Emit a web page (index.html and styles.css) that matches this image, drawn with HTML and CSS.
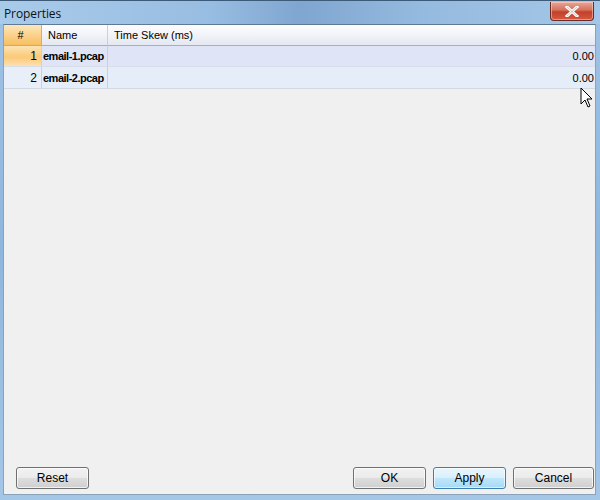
FILE: index.html
```html
<!DOCTYPE html>
<html>
<head>
<meta charset="utf-8">
<link rel="stylesheet" href="styles.css">
</head>
<body>
<div class="window">
  <div class="titlebar">
    <span class="title">Properties</span>
    <div class="close"><svg width="14" height="11" viewBox="0 0 14 11"><path d="M2 1 L12 10 M12 1 L2 10" stroke="#fff" stroke-width="3" stroke-linecap="square"/><path d="M2 1 L12 10 M12 1 L2 10" stroke="#7a2a22" stroke-width="0.6" fill="none" opacity="0.5"/></svg></div>
  </div>
  <div class="client">
    <div class="grid">
      <div class="row head">
        <div class="c num hsel">#</div>
        <div class="c name">Name</div>
        <div class="c skew">Time Skew (ms)</div>
      </div>
      <div class="row r1">
        <div class="c num nsel">1</div>
        <div class="c name b">email-1.pcap</div>
        <div class="c skew val">0.00</div>
      </div>
      <div class="row r2">
        <div class="c num">2</div>
        <div class="c name b">email-2.pcap</div>
        <div class="c skew val">0.00</div>
      </div>
    </div>
    <div class="spacer"></div>
    <div class="buttons">
      <button class="btn">Reset</button>
      <div class="grow"></div>
      <button class="btn">OK</button>
      <button class="btn focus">Apply</button>
      <button class="btn wide">Cancel</button>
    </div>
  </div>
  <svg class="cursor" width="14" height="22" viewBox="0 0 14 22"><path d="M1 1 L1 17 L5 13 L8 20 L10 19 L7 12 L12 12 Z" fill="#fff" stroke="#000" stroke-width="1" stroke-linejoin="miter"/></svg>
</div>
</body>
</html>
```
FILE: styles.css
```css
* { box-sizing: border-box; }
html, body { margin: 0; padding: 0; }
body { width: 600px; height: 500px; overflow: hidden; font-family: "Liberation Sans", Arial, sans-serif; font-size: 11px; color: #000; }
.window { position: relative; width: 600px; height: 500px; display: flex; flex-direction: column; background: linear-gradient(180deg, #9fc3e6 0%, #8fb6dc 50%, #a4c7e8 100%); padding: 0 4px 5px 3px; }
.titlebar { height: 24px; display: flex; align-items: center; position: relative; background: linear-gradient(90deg, #a9cbea 0%, #98bde2 35%, #7fa6d0 50%, #95badf 70%, #a4c7e8 100%); margin: 0 -4px 0 -3px; padding: 0 6px 0 4px; border-top: 1px solid #3d5a78; }
.title { font-family: "Open Sans", "Liberation Sans", sans-serif; font-size: 12px; color: #111; letter-spacing: -0.1px; margin-top: 1px; }
.close { position: absolute; right: 6px; top: 1px; width: 44px; height: 19px; border: 1px solid #6b2a22; border-top: none; border-radius: 0 0 4px 4px; background: linear-gradient(180deg, #e8a796 0%, #d5705a 45%, #c2402c 55%, #d45a3e 100%); display: flex; align-items: center; justify-content: center; box-shadow: inset 0 0 0 1px rgba(255,220,210,0.5); }
.client { flex: 1; display: flex; flex-direction: column; background: #f0f0f0; border: 1px solid #8aa2ba; border-top-color: #5f7a95; }
.grid { display: flex; flex-direction: column; }
.row { display: flex; height: 21px; }
.row.r2 { height: 22px; border-bottom: 1px solid #d4dae4; }
.c { display: flex; align-items: center; padding: 0 6px; border-right: 1px solid #c8d0dc; border-bottom: 1px solid #d8dde8; white-space: nowrap; flex-shrink: 0; overflow: hidden; }
.num { width: 38px; justify-content: flex-end; padding-right: 4px; font-size: 12px; }
.name { width: 66px; }
.skew { flex: 1 1 auto; border-right: none; }
.head .c { background: linear-gradient(180deg, #fdfdfe 0%, #f1f3f8 50%, #e4e8f1 100%); border-bottom: 1px solid #a6afc2; border-right-color: #c9cfdc; }
.head .num { justify-content: center; padding: 0 4px 0 0; font-size: 11px; }
.head .hsel { background: linear-gradient(180deg, #fde6bc 0%, #fbd28c 50%, #f8bf60 100%); border-right-color: #d9ae6a; }
.r1 .c { background: #dfe5f7; }
.r2 .c { background: #e4edf8; border-bottom: none; }
.r1 .nsel { background: linear-gradient(180deg, #fde3b4 0%, #fbc978 55%, #fde1ae 100%); }
.r2 .num { background: #e9eff8; }
.b { font-weight: bold; letter-spacing: -0.5px; padding-left: 1px; padding-right: 0; font-size: 11px; }
.val { justify-content: flex-end; padding-right: 1px; font-size: 11px; }
.spacer { flex: 1; }
.buttons { display: flex; gap: 7px; padding: 0 1px 5px 12px; }
.grow { flex: 1; }
.btn { width: 73px; height: 22px; font-family: "Liberation Sans", Arial, sans-serif; font-size: 12px; color: #000; border: 1px solid #707070; border-radius: 3px; background: linear-gradient(180deg, #f2f2f2 0%, #ebebeb 48%, #dddddd 52%, #cfcfcf 100%); box-shadow: inset 0 0 0 1px rgba(255,255,255,0.7); padding: 0; flex-shrink: 0; }
.btn.focus { border-color: #3c7fb1; background: linear-gradient(180deg, #eaf6fd 0%, #d9f0fc 48%, #bee6fd 52%, #a7d9f5 100%); box-shadow: inset 0 0 0 1px rgba(255,255,255,0.6); }
.btn.wide { width: 81px; }
.cursor { position: absolute; left: 580px; top: 87px; }
```
